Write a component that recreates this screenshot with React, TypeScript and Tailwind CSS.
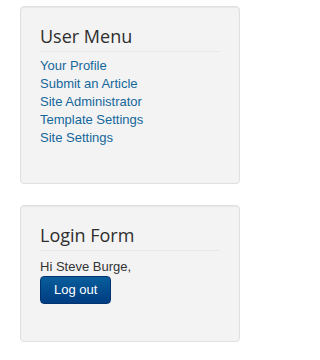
const links = ['Your Profile', 'Submit an Article', 'Site Administrator', 'Template Settings', 'Site Settings']

function ModuleHeading({ title }: { title: string }) {
  return (
    <h3 className="pt-[17px] pb-[3px] border-b border-[#e8e8e8] font-['Open_Sans',sans-serif] text-[18px] leading-[24px] font-normal text-[#2e2e2e]">
      {title}
    </h3>
  )
}

export default function App() {
  return (
    <div className="min-h-[360px] bg-white pl-[20px] pt-[6px] font-['Liberation_Sans',Arial,sans-serif] text-[13px] leading-[18px] text-[#333]">
      {/* User Menu */}
      <div className="w-[220px] h-[178px] rounded-[4px] border border-[#e0e0e0] bg-[#f3f3f3] px-[19px] shadow-[inset_0_1px_1px_rgba(0,0,0,0.05)]">
        <ModuleHeading title="User Menu" />
        <ul className="mt-[5px]">
          {links.map((l) => (
            <li key={l}>
              <a href="#" className="text-[#14679b]">{l}</a>
            </li>
          ))}
        </ul>
      </div>

      {/* Login Form */}
      <div className="mt-[21px] w-[220px] h-[137px] rounded-[4px] border border-[#e0e0e0] bg-[#f3f3f3] px-[19px] shadow-[inset_0_1px_1px_rgba(0,0,0,0.05)]">
        <ModuleHeading title="Login Form" />
        <p className="mt-[7px]">Hi Steve Burge,</p>
        <button className="h-[28px] rounded-[4px] border border-[#003470] bg-gradient-to-b from-[#0b5e9b] to-[#003c82] px-[13px] text-[13px] leading-[18px] text-white">
          Log out
        </button>
      </div>
    </div>
  )
}
